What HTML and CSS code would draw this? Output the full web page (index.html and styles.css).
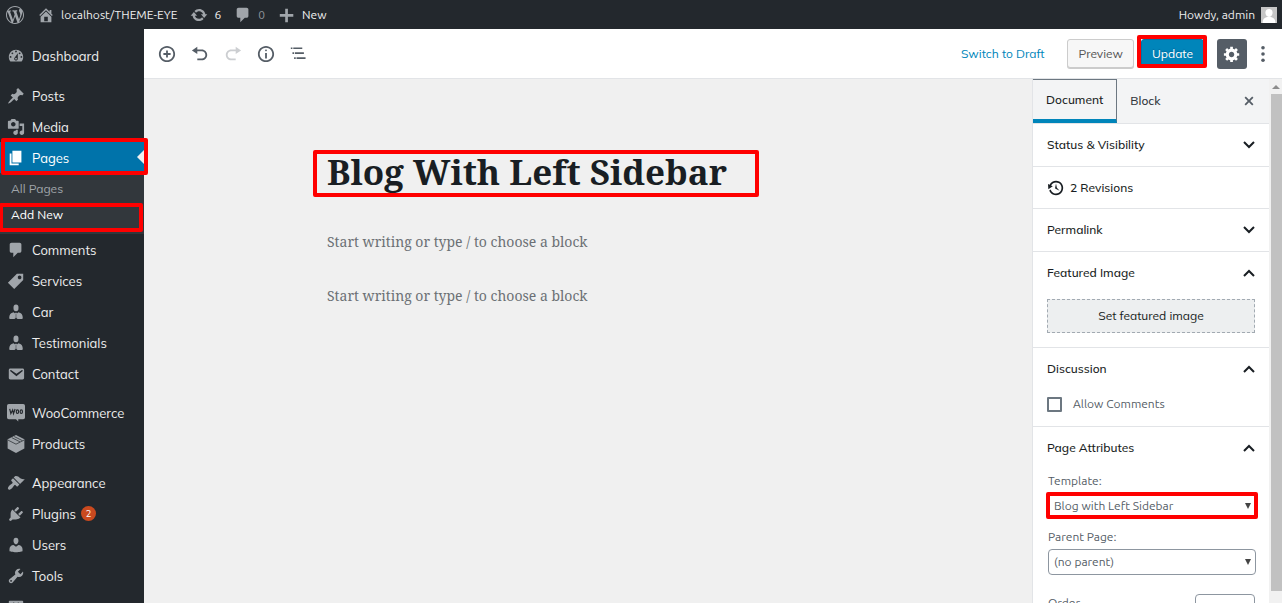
FILE: index.html
```html
<!DOCTYPE html>
<html lang="en">
<head>
<meta charset="utf-8">
<title>Edit Page</title>
<link rel="stylesheet" href="styles.css">
</head>
<body>
<header class="adminbar">
  <a class="bar-item" href="#" aria-label="About WordPress"><svg class="icon bar-icon" viewBox="0 0 20 20"><path d="M20 10c0-5.51-4.49-10-10-10C4.48 0 0 4.49 0 10c0 5.52 4.48 10 10 10 5.51 0 10-4.48 10-10zM7.78 15.37L4.37 6.22c.55-.02 1.17-.08 1.17-.08.5-.06.44-1.13-.06-1.11 0 0-1.45.11-2.37.11-.18 0-.37 0-.58-.01C4.12 2.69 6.87 1.11 10 1.11c2.33 0 4.45.87 6.05 2.34-.68-.11-1.65.39-1.65 1.58 0 .74.45 1.36.9 2.1.35.61.55 1.36.55 2.46 0 1.49-1.4 5-1.4 5l-3.03-8.37c.54-.02.82-.17.82-.17.5-.05.44-1.25-.06-1.22 0 0-1.44.12-2.38.12-.87 0-2.33-.12-2.33-.12-.5-.03-.56 1.2-.06 1.22l.92.08 1.26 3.41zM17.41 10c.24-.64.74-1.87.43-4.25.7 1.29 1.05 2.71 1.05 4.25 0 3.29-1.73 6.24-4.4 7.78.97-2.59 1.94-5.2 2.92-7.78zM6.1 18.09C3.12 16.65 1.11 13.53 1.11 10c0-1.3.23-2.48.72-3.59C3.25 10.3 4.67 14.2 6.1 18.09zm4.03-6.63l2.58 6.98c-.86.29-1.76.45-2.71.45-.79 0-1.57-.11-2.29-.33.81-2.38 1.62-4.74 2.42-7.1z"/></svg></a>
  <a class="bar-item" href="#"><svg class="icon bar-icon" viewBox="0 0 20 20"><path d="M16 8.5l1.53 1.53-1.06 1.06L10 4.6l-6.47 6.49-1.06-1.06L10 2.5l4 4v-2h2v4zm-6-2.46l6 5.99V18H4v-5.97zM12 17v-5H8v5h4z"/></svg>localhost/THEME-EYE</a>
  <a class="bar-item" href="#"><svg class="icon bar-icon" viewBox="0 0 20 20"><path d="M10.2 3.28c3.53 0 6.43 2.61 6.92 6h2.08l-3.5 4-3.5-4h2.32c-.45-1.97-2.21-3.45-4.32-3.45-1.45 0-2.73.71-3.54 1.78L4.95 5.66C6.23 4.2 8.11 3.28 10.2 3.28zm-.4 13.44c-3.52 0-6.43-2.61-6.92-6H.8l3.5-4c1.17 1.33 2.33 2.67 3.5 4H5.48c.45 1.97 2.21 3.45 4.32 3.45 1.45 0 2.73-.71 3.54-1.78l1.71 1.95c-1.28 1.46-3.15 2.38-5.25 2.38z"/></svg>6</a>
  <a class="bar-item muted" href="#"><svg class="icon bar-icon" viewBox="0 0 20 20"><path d="M5 2h9c1.1 0 2 .9 2 2v7c0 1.1-.9 2-2 2h-2l-5 5v-5H5c-1.1 0-2-.9-2-2V4c0-1.1.9-2 2-2z"/></svg>0</a>
  <a class="bar-item" href="#"><svg class="icon bar-icon" viewBox="0 0 20 20"><path d="M17 9v3h-6v6H8v-6H2V9h6V3h3v6z"/></svg>New</a>
  <a class="bar-item account" href="#">Howdy, admin
    <svg class="avatar" viewBox="0 0 16 16"><path fill="#c6c6c6" d="M0 0h16v16H0z"/><path fill="#fff" d="M8 2c2.300 0 3.600 1.600 3.600 3.800S10 10 8 10 4.400 8 4.400 5.800 5.700 2 8 2zM1.500 16c0-3.600 2-5.500 4.500-6h4c2.500.5 4.500 2.400 4.500 6z"/></svg></a>
</header>
<div class="shell">
  <nav class="menu" aria-label="Main menu">
    <div class="group">
      <a class="menu-item" href="#"><svg class="icon" viewBox="0 0 20 20"><path d="M3.760 16h12.480c1.100-1.370 1.760-3.110 1.760-5 0-4.420-3.580-8-8-8s-8 3.580-8 8c0 1.890.66 3.630 1.760 5zM10 4c.55 0 1 .45 1 1s-.45 1-1 1-1-.45-1-1 .45-1 1-1zM6 6c.55 0 1 .45 1 1s-.45 1-1 1-1-.45-1-1 .45-1 1-1zm8 0c.55 0 1 .45 1 1s-.45 1-1 1-1-.45-1-1 .45-1 1-1zm-5.370 5.550L12 7v6c0 1.100-.9 2-2 2s-2-.9-2-2c0-.57.24-1.080.63-1.450zM4 10c.55 0 1 .45 1 1s-.45 1-1 1-1-.45-1-1 .45-1 1-1zm12 0c.55 0 1 .45 1 1s-.45 1-1 1-1-.45-1-1 .45-1 1-1zm-5 3c0-.55-.45-1-1-1s-1 .45-1 1 .45 1 1 1 1-.45 1-1z"/></svg>Dashboard</a>
    </div>
    <div class="group">
      <a class="menu-item" href="#"><svg class="icon" viewBox="0 0 20 20"><path d="M10.440 3.020l1.820-1.820 6.360 6.350-1.830 1.820c-1.050-.68-2.480-.57-3.410.36l-.75.75c-.92.93-1.040 2.350-.35 3.410l-1.830 1.820-2.410-2.410-2.800 2.790c-.42.42-3.380 2.710-3.800 2.290s1.860-3.390 2.280-3.810l2.790-2.790L4.100 9.360l1.830-1.820c1.050.69 2.480.57 3.400-.36l.75-.75c.93-.92 1.050-2.350.36-3.410z"/></svg>Posts</a>
      <a class="menu-item" href="#"><svg class="icon" viewBox="0 0 20 20"><path d="M13 11V4c0-.55-.45-1-1-1h-1.670L9 1H5L3.670 3H2c-.55 0-1 .45-1 1v7c0 .55.45 1 1 1h10c.55 0 1-.45 1-1zM7 4.500c1.380 0 2.500 1.120 2.500 2.500S8.380 9.500 7 9.500 4.500 8.380 4.500 7 5.620 4.500 7 4.500zM14 6h5v10.500c0 1.380-1.120 2.500-2.500 2.500S14 17.880 14 16.500s1.120-2.500 2.500-2.500c.17 0 .34.02.5.05V9h-3V6zm-4 8.050V13h2v3.500c0 1.380-1.120 2.500-2.500 2.500S7 17.880 7 16.500 8.120 14 9.500 14c.17 0 .34.02.5.05z"/></svg>Media</a>
      <div class="marked mark-pages"><a class="menu-item current" href="#"><svg class="icon" viewBox="0 0 20 20"><path d="M6 15V2h10v13H6zm-1 1h8v2H3V5h2v11z"/></svg>Pages</a></div>
      <div class="submenu">
        <a class="sub-item" href="#">All Pages</a>
        <a class="sub-item active marked mark-new" href="#">Add New</a>
      </div>
      <a class="menu-item" href="#"><svg class="icon" viewBox="0 0 20 20"><path d="M5 2h9c1.100 0 2 .9 2 2v7c0 1.100-.9 2-2 2h-2l-5 5v-5H5c-1.100 0-2-.9-2-2V4c0-1.100.9-2 2-2z"/></svg>Comments</a>
      <a class="menu-item" href="#"><svg class="icon" viewBox="0 0 20 20"><path d="M11 2h7v7L8 19l-7-7zm3 6c1.100 0 2-.9 2-2s-.9-2-2-2-2 .9-2 2 .9 2 2 2z"/></svg>Services</a>
      <a class="menu-item" href="#"><svg class="icon" viewBox="0 0 20 20"><ellipse cx="10" cy="5.500" rx="2.800" ry="3.700"/><path d="M7.300 10.200L9.300 12l-.6 5.900H3.500c-.8-.3-1-1-1-1.900 0-2.800 1.500-5.300 4.800-5.800zM12.700 10.200L10.700 12l.6 5.900h5.200c.8-.3 1-1 1-1.900 0-2.800-1.500-5.300-4.800-5.800zM9.300 10.700h1.400l.3 1-.5.8.4 3.700-.9 1.300-.9-1.300.4-3.700-.5-.8z"/></svg>Car</a>
      <a class="menu-item" href="#"><svg class="icon" viewBox="0 0 20 20"><ellipse cx="10" cy="5.500" rx="2.800" ry="3.700"/><path d="M7.300 10.200L9.300 12l-.6 5.900H3.500c-.8-.3-1-1-1-1.900 0-2.800 1.500-5.300 4.800-5.800zM12.700 10.200L10.700 12l.6 5.900h5.200c.8-.3 1-1 1-1.900 0-2.800-1.500-5.300-4.800-5.800zM9.300 10.700h1.400l.3 1-.5.8.4 3.700-.9 1.300-.9-1.300.4-3.700-.5-.8z"/></svg>Testimonials</a>
      <a class="menu-item" href="#"><svg class="icon" viewBox="0 0 20 20"><path d="M3.870 4h13.250C18.370 4 19 4.590 19 5.790v8.420c0 1.190-.63 1.790-1.880 1.790H3.870c-1.250 0-1.880-.6-1.880-1.790V5.790c0-1.200.63-1.790 1.880-1.790zm6.620 8.600l6.740-5.530c.24-.2.43-.66.13-1.070-.29-.41-.82-.42-1.170-.17l-5.700 3.860L4.800 5.830c-.35-.25-.88-.24-1.170.17-.3.41-.11.87.13 1.070z"/></svg>Contact</a>
    </div>
    <div class="group">
      <a class="menu-item" href="#"><svg class="icon" viewBox="0 0 20 20"><path d="M2 0h16a2 2 0 0 1 2 2v13a2 2 0 0 1-2 2h-5.500v2.500L10 17H2a2 2 0 0 1-2-2V2a2 2 0 0 1 2-2z"/><g fill="none" stroke="#23282d" stroke-width="1.300"><path d="M3 5.500l1.300 5.200 2-4 .9 4L9 5.500"/><ellipse cx="11.600" cy="8.500" rx="1.300" ry="2"/><ellipse cx="15.900" cy="8.500" rx="1.300" ry="2"/></g></svg>WooCommerce</a>
      <a class="menu-item" href="#"><svg class="icon" viewBox="0 0 20 20"><path d="M10 0l9.300 4.700v10.200L10 20 .7 14.900V4.700z"/><path fill="none" stroke="#23282d" stroke-width=".8" d="M1 5.600l9 4.600 9-4.600M5.400 3l9 4.600M8 1.700l9 4.500"/></svg>Products</a>
    </div>
    <div class="group">
      <a class="menu-item" href="#"><svg class="icon" viewBox="0 0 20 20"><path d="M14.480 11.060L7.410 3.990l1.500-1.500c.5-.56 2.300-.47 3.510.32 1.210.8 1.430 1.280 2.910 2.100 1.180.64 2.450 1.260 4.450.85zm-.71.71L6.700 4.700 4.930 6.470c-.39.39-.39 1.020 0 1.410l1.060 1.060c.39.39.39 1.030 0 1.420-.6.6-1.430 1.110-2.210 1.690-.35.26-.7.53-1.010.84C1.430 14.230.4 16.080 1.400 17.070c.99 1 2.840-.03 4.180-1.360.31-.31.58-.66.85-1.020.57-.78 1.080-1.610 1.690-2.210.39-.39 1.020-.39 1.410 0l1.060 1.060c.39.39 1.020.39 1.410 0z"/></svg>Appearance</a>
      <a class="menu-item" href="#"><svg class="icon" viewBox="0 0 20 20"><path d="M13.110 4.360L9.870 7.600 8 5.730l3.240-3.240c.35-.34 1.050-.2 1.560.32.52.51.66 1.210.31 1.550zm-8 1.770l.91-1.120 9.010 9.010-1.190.84c-.71.71-2.630 1.160-3.820 1.160H6.140L4.900 17.260c-.59.59-1.540.59-2.120 0-.59-.58-.59-1.530 0-2.120l1.240-1.240v-3.880c0-1.130.4-3.190 1.090-3.890zm7.260 3.970l3.240-3.240c.34-.35 1.040-.21 1.550.31.52.51.66 1.210.31 1.550l-3.240 3.250z"/></svg>Plugins<span class="count">2</span></a>
      <a class="menu-item" href="#"><svg class="icon" viewBox="0 0 20 20"><path d="M10 9.250c-2.270 0-2.730-3.440-2.730-3.440C7 4.020 7.820 2 9.970 2c2.160 0 2.980 2.020 2.710 3.810 0 0-.41 3.440-2.680 3.440zm0 2.570L12.720 10c2.390 0 4.520 2.330 4.520 4.530v2.490s-3.650 1.130-7.240 1.130c-3.650 0-7.240-1.130-7.240-1.130v-2.490c0-2.250 1.940-4.480 4.470-4.480z"/></svg>Users</a>
      <a class="menu-item" href="#"><svg class="icon" viewBox="0 0 20 20"><path d="M16.680 9.770c-1.340 1.340-3.300 1.670-4.950.99l-5.410 6.520c-.99.99-2.590.99-3.580 0s-.99-2.590 0-3.570l6.520-5.420c-.68-1.650-.35-3.610.99-4.950 1.280-1.280 3.120-1.620 4.720-1.060l-2.890 2.890 2.820 2.820 2.860-2.870c.53 1.580.18 3.390-1.080 4.650zM3.810 16.210c.4.39 1.040.39 1.430 0 .4-.4.4-1.040 0-1.430-.39-.4-1.030-.4-1.430 0-.39.39-.39 1.030 0 1.430z"/></svg>Tools</a>
      <a class="menu-item" href="#" aria-label="Settings"><svg class="icon" viewBox="0 0 20 20"><path fill-rule="evenodd" d="M18 16V4c0-.55-.45-1-1-1H3c-.55 0-1 .45-1 1v12c0 .55.45 1 1 1h14c.55 0 1-.45 1-1zM7 5h1v6H7zM12 5h1v3h-1z"/></svg></a>
    </div>
  </nav>
  <div class="editor">
    <div class="toolbar">
      <div class="tools">
        <button class="tool" aria-label="Add block"><svg class="icon" viewBox="0 0 20 20"><path d="M10 1c-5 0-9 4-9 9s4 9 9 9 9-4 9-9-4-9-9-9zm0 16c-3.900 0-7-3.100-7-7s3.100-7 7-7 7 3.100 7 7-3.100 7-7 7zm1-11H9v3H6v2h3v3h2v-3h3V9h-3V6z"/></svg></button>
        <button class="tool" aria-label="Undo"><svg class="icon" viewBox="0 0 20 20"><path d="M12 5H7V2L1 6l6 4V7h5c2.200 0 4 1.800 4 4s-1.800 4-4 4H7v2h5c3.300 0 6-2.700 6-6s-2.700-6-6-6z"/></svg></button>
        <button class="tool" aria-label="Redo" disabled><svg class="icon" viewBox="0 0 20 20"><path d="M8 5h5V2l6 4-6 4V7H8c-2.200 0-4 1.800-4 4s1.800 4 4 4h5v2H8c-3.300 0-6-2.700-6-6s2.700-6 6-6z"/></svg></button>
        <button class="tool" aria-label="Content structure"><svg class="icon" viewBox="0 0 20 20"><path d="M9 15h2V9H9v6zm1-10c-.5 0-1 .5-1 1s.5 1 1 1 1-.5 1-1-.5-1-1-1zm0-4c-5 0-9 4-9 9s4 9 9 9 9-4 9-9-4-9-9-9zm0 16c-3.900 0-7-3.100-7-7s3.100-7 7-7 7 3.100 7 7-3.100 7-7 7z"/></svg></button>
        <button class="tool" aria-label="Block navigation"><svg class="icon" viewBox="2 2 22 22"><path d="M5 5H3v2h2V5zm3 8h11v-2H8v2zm9-8H6v2h11V5zM7 11H5v2h2v-2zm0 8h2v-2H7v2zm3-2v2h11v-2H10z"/></svg></button>
      </div>
      <div class="actions">
        <button class="link-button">Switch to Draft</button>
        <button class="button">Preview</button>
        <span class="marked mark-update"><button class="button primary">Update</button></span>
        <button class="settings" aria-label="Settings"><svg class="icon" viewBox="0 0 20 20"><path d="M18 12h-2.180c-.17.7-.44 1.350-.81 1.930l1.540 1.540-2.100 2.100-1.540-1.540c-.58.36-1.230.63-1.910.79V19H8v-2.180c-.68-.16-1.330-.43-1.910-.79l-1.540 1.540-2.120-2.120 1.540-1.540c-.36-.58-.63-1.230-.79-1.910H1V9.030h2.170c.16-.7.44-1.350.8-1.940L2.430 5.550l2.100-2.100 1.540 1.540c.58-.37 1.240-.64 1.930-.81V2h3v2.180c.68.16 1.330.43 1.910.79l1.540-1.540 2.120 2.120-1.540 1.540c.36.59.64 1.240.8 1.940H18V12zm-8.500 1.500c1.660 0 3-1.340 3-3s-1.340-3-3-3-3 1.340-3 3 1.340 3 3 3z"/></svg></button>
        <button class="more" aria-label="More tools"><svg class="icon" viewBox="0 0 20 20"><circle cx="10" cy="3" r="2"/><circle cx="10" cy="10" r="2"/><circle cx="10" cy="17" r="2"/></svg></button>
      </div>
    </div>
    <div class="workspace">
      <main class="canvas">
        <article class="page">
          <h1 class="title marked mark-title">Blog With Left Sidebar</h1>
          <p class="prompt">Start writing or type / to choose a block</p>
          <p class="prompt">Start writing or type / to choose a block</p>
        </article>
      </main>
      <aside class="inspector">
        <div class="tabs">
          <button class="tab selected">Document</button>
          <button class="tab">Block</button>
          <button class="close" aria-label="Close settings"><svg class="icon" viewBox="0 0 20 20"><path d="M14.950 6.460L11.410 10l3.540 3.540-1.410 1.410L10 11.420l-3.530 3.530-1.420-1.420L8.580 10 5.050 6.470l1.420-1.420L10 8.580l3.540-3.530z"/></svg></button>
        </div>
        <section class="panel"><button class="panel-head">Status &amp; Visibility<svg class="chevron" viewBox="0 0 12 8"><path d="M1 1l5 5 5-5"/></svg></button></section>
        <section class="panel"><button class="panel-head revisions"><svg class="icon" viewBox="0 0 20 20"><path d="M13.650 2.880c3.930 2.010 5.480 6.840 3.470 10.770s-6.830 5.480-10.770 3.470c-1.870-.96-3.200-2.560-3.860-4.400l1.640-1.030c.45 1.570 1.520 2.950 3.080 3.760 3.010 1.540 6.690.35 8.230-2.660 1.550-3.010.36-6.690-2.650-8.240C9.780 3.010 6.100 4.200 4.560 7.210l1.880.97-4.950 3.080-.39-5.820 1.780.91C4.900 2.400 9.750.89 13.650 2.880zm-4.360 7.830C9.110 10.530 9 10.280 9 10c0-.07.03-.12.04-.19h-.01L10 5l.97 4.810L14 13l-4.500-2.120.02-.02c-.08-.04-.16-.09-.23-.15z"/></svg>2 Revisions</button></section>
        <section class="panel"><button class="panel-head">Permalink<svg class="chevron" viewBox="0 0 12 8"><path d="M1 1l5 5 5-5"/></svg></button></section>
        <section class="panel"><button class="panel-head">Featured Image<svg class="chevron" viewBox="0 0 12 8"><path d="M1 7l5-5 5 5"/></svg></button>
          <div class="panel-body featured"><button class="drop">Set featured image</button></div></section>
        <section class="panel"><button class="panel-head">Discussion<svg class="chevron" viewBox="0 0 12 8"><path d="M1 7l5-5 5 5"/></svg></button>
          <div class="panel-body discussion"><label class="check-row"><input class="check" type="checkbox">Allow Comments</label></div></section>
        <section class="panel"><button class="panel-head">Page Attributes<svg class="chevron" viewBox="0 0 12 8"><path d="M1 7l5-5 5 5"/></svg></button>
          <div class="panel-body attributes">
            <label class="field-label" for="template">Template:</label>
            <div class="select-wrap marked mark-template"><select class="select" id="template"><option>Blog with Left Sidebar</option></select></div>
            <label class="field-label" for="parent">Parent Page:</label>
            <div class="select-wrap"><select class="select" id="parent"><option>(no parent)</option></select></div>
            <div class="order-row"><label class="field-label" for="order">Order</label><input class="order" id="order" type="text"></div>
          </div></section>
      </aside>
      <div class="scrollbar"><span class="arrow"></span><span class="thumb"></span></div>
    </div>
  </div>
</div>
</body>
</html>
```
FILE: styles.css
```css
* { box-sizing: border-box; }
body {
  margin: 0;
  height: 100vh;
  display: flex;
  flex-direction: column;
  overflow: hidden;
  font: 12px/18px "Muli", "Mulish", "Lato", sans-serif;
  color: #191e23;
  background: #f0f0f0;
}
a { text-decoration: none; color: inherit; }
button { font: inherit; color: inherit; border: 0; background: none; padding: 0; }
.icon { width: 18px; height: 18px; fill: currentColor; flex: none; display: block; }

/* Admin bar */
.adminbar {
  display: flex;
  align-items: center;
  gap: 13px;
  height: 29px;
  flex: none;
  padding: 0 5px 0 6px;
  background: #23282d;
  color: #eee;
  font: 12px/18px "Ubuntu", "Noto Sans", sans-serif;
}
.bar-item { display: flex; align-items: center; gap: 6px; }
.bar-icon { color: #a0a5aa; }
.muted { color: #8c9196; }
.account { margin-left: auto; }
.avatar { width: 16px; height: 16px; }

.shell { display: flex; flex: 1; min-height: 0; }

/* Left navigation */
.menu {
  width: 144px;
  flex: none;
  padding-top: 11px;
  background: #23282d;
  color: #eee;
  font-size: 13px;
}
.group { margin-bottom: 8px; }
.group:first-child { margin-bottom: 9px; }
.menu-item { display: flex; align-items: center; gap: 7px; height: 31px; padding-left: 7px; }
.menu-item .icon { color: #a0a5aa; }
.menu-item.current { background: #0073aa; color: #fff; position: relative; }
.menu-item.current .icon { color: #fff; }
.menu-item.current::after {
  content: "";
  position: absolute;
  right: 0;
  top: 8px;
  border: 7px solid transparent;
  border-left: 0;
  border-right-color: #f0f0f0;
}
.submenu { padding: 3px 0 6px; background: #32373c; }
.sub-item { display: block; padding: 0 11px; font-size: 12px; line-height: 26px; color: #a0a5aa; }
.sub-item.active { color: #fff; }
.count {
  width: 15px;
  height: 15px;
  margin-left: -2px;
  border-radius: 50%;
  background: #ca4a1f;
  color: #fff;
  font-size: 9px;
  line-height: 15px;
  text-align: center;
}

/* Red callout frames */
.marked { position: relative; }
.marked::before {
  content: "";
  position: absolute;
  z-index: 2;
  border: 4px solid #f00;
  border-radius: 2px;
  pointer-events: none;
}
.mark-pages::before { inset: -4px -4px -2px 1px; }
.mark-new::before { inset: 1px 1px -4px -1px; }
.mark-update::before { inset: -4px -3px 0 -4px; }
.mark-title::before { inset: 0; }
.mark-template::before { inset: -1px -2px 0; }

/* Editor */
.editor { flex: 1; min-width: 0; display: flex; flex-direction: column; }
.toolbar {
  display: flex;
  align-items: center;
  justify-content: space-between;
  height: 50px;
  flex: none;
  padding: 0 10px 0 14px;
  background: #fff;
  border-bottom: 1px solid #e2e4e7;
}
.tools, .actions { display: flex; align-items: center; }
.tools { gap: 15px; color: #555d66; }
.tool:disabled { color: #ccced1; }
.actions { gap: 7px; }
.link-button { color: #0085ba; margin-right: 16px; }
.button {
  display: block;
  height: 29px;
  padding: 0 10px;
  border: 1px solid #ccc;
  border-radius: 3px;
  background: #f7f7f7;
  box-shadow: 0 1px 0 #ccc;
  color: #555;
}
.button.primary { background: #0085ba; border-color: #0073aa; box-shadow: none; color: #fff; text-shadow: 0 -1px 1px #006799; }
.settings {
  width: 30px;
  height: 30px;
  margin-left: 6px;
  border-radius: 3px;
  background: #555d66;
  color: #fff;
  display: grid;
  place-items: center;
}
.more { color: #555d66; }
.workspace { flex: 1; min-height: 0; display: flex; }
.canvas { flex: 1; min-width: 0; background: #f0f0f0; }
.page { max-width: 550px; margin: 0 auto; padding-top: 71px; font-family: "Noto Serif", "DejaVu Serif Condensed", "DejaVu Serif", serif; }
.title { width: fit-content; margin: 0 0 33px; padding: 0 32px 3px 14px; font-size: 35px; line-height: 44px; white-space: nowrap; }
.prompt { margin: 0 0 30px; padding: 0 14px; font-size: 14px; line-height: 24px; color: #6c7075; }

/* Settings panel */
.inspector { width: 237px; flex: none; overflow: hidden; background: #fff; border-left: 1px solid #e2e4e7; }
.tabs { display: flex; height: 45px; background: #f3f4f5; border-bottom: 1px solid #e2e4e7; }
.tab { padding: 0 13px; color: #32373c; font-weight: 500; }
.tab.selected { border: 1px solid #6c7781; border-left-width: 0; border-bottom: 4px solid #0085ba; color: #191e23; }
.close { margin-left: auto; padding-right: 11px; color: #555d66; }
.panel { border-bottom: 1px solid #e2e4e7; }
.panel-head { display: flex; align-items: center; justify-content: space-between; width: 100%; height: 42px; padding: 0 14px; font-weight: 500; }
.revisions { justify-content: flex-start; gap: 5px; height: 41px; }
.chevron { width: 12px; height: 8px; fill: none; stroke: #191e23; stroke-width: 2; }
.panel-body { padding: 0 14px; color: #555d66; font: 12px/18px "Ubuntu", "Noto Sans", sans-serif; }
.featured { padding-top: 5px; padding-bottom: 14px; }
.drop {
  width: 100%;
  height: 34px;
  border: 1px dashed #a2aab2;
  background: #edeff0;
  color: #191e23;
  font: 12px/18px "Muli", "Mulish", "Lato", sans-serif;
}
.discussion { padding-top: 5px; padding-bottom: 13px; }
.check-row { display: flex; align-items: center; gap: 11px; }
.check { appearance: none; width: 15px; height: 15px; margin: 0; border: 2px solid #6c7781; border-radius: 1px; }
.attributes { padding-top: 3px; }
.field-label { display: block; padding-left: 1px; }
.select-wrap { position: relative; margin: 3px -1px 9px 1px; }
.select-wrap::after {
  content: "";
  position: absolute;
  right: 5px;
  top: 10px;
  border: 3px solid transparent;
  border-top: 6px solid #444;
  border-bottom: 0;
}
.select {
  appearance: none;
  display: block;
  width: 100%;
  height: 26px;
  padding: 0 5px;
  border: 1px solid #8d96a0;
  border-radius: 4px;
  background: #fff;
  color: #555d66;
  font: inherit;
}
.order-row { display: flex; justify-content: space-between; align-items: flex-start; padding-top: 10px; }
.order { width: 60px; height: 26px; border: 1px solid #8d96a0; border-radius: 4px; }
.scrollbar { width: 13px; flex: none; display: flex; flex-direction: column; align-items: flex-end; padding-bottom: 12px; background: #f1f1f1; }
.arrow { margin: 6px 2px 5px; border: 4px solid transparent; border-top: 0; border-bottom: 4px solid #8c8c8c; }
.thumb { width: 11px; flex: 1; background: #c1c1c1; }
```
